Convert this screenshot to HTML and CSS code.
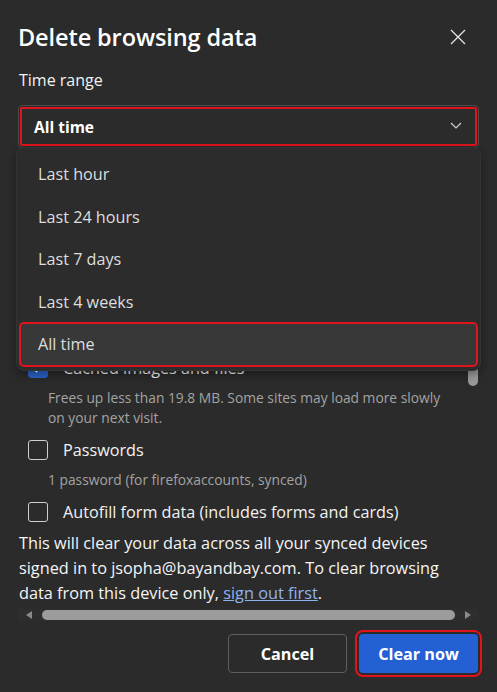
FILE: index.html
```html
<!DOCTYPE html>
<html lang="en">
<head>
<meta charset="utf-8">
<title>Delete browsing data</title>
<link rel="stylesheet" href="styles.css">
</head>
<body>
<div class="dialog">
  <header class="head">
    <h1 class="title">Delete browsing data</h1>
    <button class="close" aria-label="Close">
      <svg width="16" height="16" viewBox="0 0 16 16"><path d="M1 1L15 15M15 1L1 15" stroke="#e6e6e6" stroke-width="1.3" fill="none"/></svg>
    </button>
  </header>
  <div class="label">Time range</div>
  <div class="range">
    <div class="select">
      <span class="select-value">All time</span>
      <svg class="chev" width="12" height="7" viewBox="0 0 12 7"><path d="M1 1L6 6L11 1" stroke="#d0d0d0" stroke-width="1.2" fill="none"/></svg>
    </div>
    <ul class="menu">
      <li class="opt">Last hour</li>
      <li class="opt">Last 24 hours</li>
      <li class="opt">Last 7 days</li>
      <li class="opt">Last 4 weeks</li>
      <li class="opt opt-sel">All time</li>
    </ul>
  </div>
  <div class="list">
    <div class="item">
      <div class="row"><span class="box box-on"><svg width="14" height="14" viewBox="0 0 14 14"><path d="M2.5 7.5L5.5 10.5L11.5 3.5" stroke="#fff" stroke-width="1.6" fill="none"/></svg></span><span class="name">Cached images and files</span></div>
      <div class="desc">Frees up less than 19.8 MB. Some sites may load more slowly on your next visit.</div>
    </div>
    <div class="item">
      <div class="row"><span class="box"></span><span class="name">Passwords</span></div>
      <div class="desc">1 password (for firefoxaccounts, synced)</div>
    </div>
    <div class="item">
      <div class="row"><span class="box"></span><span class="name">Autofill form data (includes forms and cards)</span></div>
    </div>
    <div class="vthumb"></div>
  </div>
  <p class="note">This will clear your data across all your synced devices signed in to jsopha@bayandbay.com. To clear browsing data from this device only, <a href="#" class="link">sign out first</a>.</p>
  <div class="hscroll">
    <span class="arrow arrow-l"></span>
    <span class="hthumb"></span>
    <span class="arrow arrow-r"></span>
  </div>
  <div class="actions">
    <button class="btn btn-cancel">Cancel</button>
    <button class="btn btn-primary">Clear now</button>
  </div>
</div>
</body>
</html>
```
FILE: styles.css
```css
* { box-sizing: border-box; }
html, body { margin: 0; padding: 0; }
body {
  background: #2b2b2b;
  color: #ffffff;
  font-family: "Open Sans", "Noto Sans", sans-serif;
  width: 497px;
  height: 692px;
  overflow: hidden;
}
.dialog {
  padding: 0 18px;
  display: flex;
  flex-direction: column;
}
.head {
  display: flex;
  align-items: center;
  justify-content: space-between;
  padding-top: 22px;
  height: 52px;
}
.title {
  margin: 0 0 0 0;
  font-size: 23.5px;
  font-weight: 600;
  line-height: 30px;
  letter-spacing: -0.1px;
}
.close {
  background: none;
  border: 0;
  padding: 0;
  width: 16px;
  height: 16px;
  margin-right: 13px;
  display: flex;
}
.label {
  margin-top: 18px;
  margin-left: 1px;
  font-size: 16px;
  line-height: 20px;
  color: #f2f2f2;
}
.range {
  position: relative;
  margin-top: 15px;
}
.select {
  height: 43px;
  border: 1px solid #4a4a4a;
  border-radius: 4px;
  background: #2b2b2b;
  display: flex;
  align-items: center;
  justify-content: space-between;
  padding: 0 16px 0 15px;
  outline: 2px solid #e0141c;
  outline-offset: -4px;
}
.select-value {
  font-size: 15.5px;
  font-weight: 700;
}
.chev { margin-top: -2px; }
.menu {
  position: absolute;
  left: -2px;
  right: -2px;
  top: 42px;
  margin: 0;
  padding: 5px 3px 4px 3px;
  list-style: none;
  background: #2c2c2c;
  border: 1px solid #333333;
  border-radius: 8px;
  box-shadow: 0 4px 10px rgba(0,0,0,0.35);
  z-index: 5;
}
.opt {
  height: 42.5px;
  display: flex;
  align-items: center;
  padding-left: 18px;
  font-size: 16.2px;
  color: #dedede;
  border-radius: 4px;
}
.opt-sel {
  background: #383838;
  outline: 2px solid #e0141c;
  outline-offset: -1px;
}
.list {
  position: relative;
  height: 379px;
  overflow: hidden;
  display: flex;
  flex-direction: column;
  justify-content: flex-end;
  padding-left: 10px;
}
.item {
  display: flex;
  flex-direction: column;
  flex-shrink: 0;
  margin-top: 7px;
}
.row {
  height: 30px;
  display: flex;
  align-items: center;
  gap: 15px;
}
.box {
  width: 20px;
  height: 20px;
  border: 1px solid #cfcfcf;
  border-radius: 3px;
  display: flex;
  align-items: center;
  justify-content: center;
  flex-shrink: 0;
}
.box-on {
  background: #2a63cc;
  border-color: #2a63cc;
}
.name {
  font-size: 16.2px;
  color: #f2f2f2;
}
.desc {
  margin-top: 5px;
  margin-left: 20px;
  font-size: 13.8px;
  line-height: 20px;
  color: #a3a3a3;
  max-width: 405px;
}
.vthumb {
  position: absolute;
  right: 1px;
  top: 200px;
  width: 10px;
  height: 38px;
  border-radius: 5px;
  background: #9a9a9a;
}
.note {
  margin: 4px 20px 0 1px;
  font-size: 16.3px;
  line-height: 25px;
  color: #f5f5f5;
}
.link {
  color: #8fb3ee;
  text-decoration: underline;
}
.hscroll {
  margin-top: 3px;
  height: 12px;
  background: #2e2e2e;
  display: flex;
  align-items: center;
  padding: 0 8px 0 8px;
  gap: 5px;
}
.arrow {
  width: 0;
  height: 0;
  border-top: 4px solid transparent;
  border-bottom: 4px solid transparent;
}
.arrow-l { border-right: 6px solid #8a8a8a; }
.arrow-r { border-left: 6px solid #8a8a8a; }
.hthumb {
  flex: 1;
  height: 10px;
  border-radius: 5px;
  background: #9c9c9c;
  margin: 0 5px;
}
.actions {
  margin-top: 13px;
  display: flex;
  justify-content: flex-end;
  gap: 12px;
  padding-right: 1px;
}
.btn {
  width: 119px;
  height: 39px;
  border-radius: 4px;
  font-family: inherit;
  font-size: 16.2px;
  font-weight: 700;
  color: #ffffff;
}
.btn-cancel {
  background: #2b2b2b;
  border: 1px solid #5e5e5e;
}
.btn-primary {
  background: #2260d4;
  border: 0;
  outline: 2px solid #e0141c;
  outline-offset: 2px;
}
```
